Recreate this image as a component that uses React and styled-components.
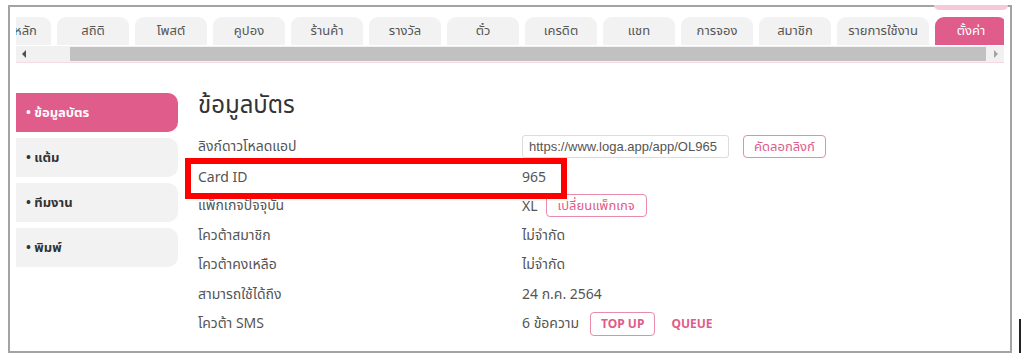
import React from "react";
import styled, { createGlobalStyle } from "styled-components";

const GlobalStyle = createGlobalStyle`
  body {
    margin: 0;
    background: #ffffff;
    font-family: "Noto Sans", "Noto Sans Thai", "Noto Sans Thai UI", "DejaVu Sans", sans-serif;
    color: #555;
  }
`;

const Frame = styled.div`
  box-sizing: border-box;
  position: relative;
  margin: 5px 0 0 8px;
  width: 1004px;
  height: 348px;
  border: 2px solid #a3a3a3;
  padding: 10px 6px 0 6px;
`;

const TabStrip = styled.div`
  border-bottom: 1px solid #f6d9e3;
`;

const TabRow = styled.div`
  display: flex;
  gap: 6px;
  overflow: hidden;
  height: 28px;
`;

const Tab = styled.div`
  flex: 0 0 auto;
  width: ${(p) => p.$w || 72}px;
  margin-left: ${(p) => p.$offset || 0}px;
  height: 28px;
  border-radius: 9px 9px 0 0;
  background: ${(p) => (p.$active ? "#e05c8a" : "#f2f2f2")};
  color: ${(p) => (p.$active ? "#fff" : "#555")};
  font-size: 13px;
  display: flex;
  align-items: center;
  justify-content: center;
  white-space: nowrap;
`;

const TopHint = styled.div`
  position: absolute;
  top: -2px;
  right: 2px;
  width: 74px;
  height: 5px;
  border-radius: 0 0 8px 8px;
  background: #f7c9d8;
`;

const Scrollbar = styled.div`
  display: flex;
  align-items: center;
  height: 16px;
  margin-top: 1px;
  background: #f1f1f1;
`;

const Arrow = styled.div`
  width: 0;
  height: 0;
  border-top: 4px solid transparent;
  border-bottom: 4px solid transparent;
  ${(p) =>
    p.$dir === "left"
      ? "border-right: 4px solid #505050; margin: 0 44px 0 6px;"
      : "border-left: 4px solid #a3a3a3; margin: 0 6px 0 8px;"}
`;

const Thumb = styled.div`
  flex: 1;
  height: 14px;
  background: #c1c1c1;
`;

const Body = styled.div`
  display: flex;
  gap: 20px;
  padding-top: 30px;
`;

const Sidebar = styled.div`
  width: 162px;
  display: flex;
  flex-direction: column;
  gap: 6px;
`;

const SideItem = styled.div`
  height: 39px;
  display: flex;
  align-items: center;
  padding-left: 10px;
  border-radius: 0 10px 10px 0;
  background: ${(p) => (p.$active ? "#e05c8a" : "#f2f2f2")};
  color: ${(p) => (p.$active ? "#fff" : "#333")};
  font-size: 13px;
  font-weight: bold;
`;

const Content = styled.div`
  position: relative;
  flex: 1;
`;

const Heading = styled.h1`
  margin: -4px 0 13px;
  font-size: 24px;
  line-height: 30px;
  font-weight: normal;
  color: #333;
`;

const Row = styled.div`
  display: grid;
  grid-template-columns: 324px 1fr;
  align-items: center;
  height: 29.5px;
  font-size: 14px;
  color: #555;
`;

const Value = styled.div`
  display: flex;
  align-items: center;
  gap: ${(p) => p.$gap ?? 8}px;
`;

const LinkInput = styled.input`
  box-sizing: border-box;
  width: 207px;
  height: 23px;
  border: 1px solid #dcdcdc;
  border-radius: 3px;
  padding: 0 6px;
  font-family: "Liberation Sans", Arial, sans-serif;
  font-size: 13px;
  color: #555;
  outline: none;
`;

const PinkButton = styled.button`
  box-sizing: border-box;
  height: ${(p) => p.$h || 23}px;
  padding: 0 ${(p) => p.$pad || 9}px;
  margin-left: ${(p) => p.$ml || 0}px;
  border: 1px solid #e98bab;
  border-radius: 4px;
  background: #fff;
  color: #e05c8a;
  font-family: inherit;
  font-size: ${(p) => (p.$bold ? 12 : 13)}px;
  font-weight: ${(p) => (p.$bold ? "bold" : "normal")};
  cursor: pointer;
`;

const LinkText = styled.span`
  margin-left: 16px;
  color: #e05c8a;
  font-size: 12px;
  font-weight: bold;
`;

const Highlight = styled.div`
  position: absolute;
  left: -13px;
  top: 65px;
  width: 382px;
  height: 41px;
  box-sizing: border-box;
  border: 6px solid #ff0000;
  pointer-events: none;
`;

const EdgeMark = styled.div`
  position: absolute;
  right: -11px;
  bottom: -12px;
  width: 2px;
  height: 44px;
  background: #222;
`;

const tabs = [
  { label: "หน้าหลัก", offset: -37 },
  { label: "สถิติ" },
  { label: "โพสต์" },
  { label: "คูปอง" },
  { label: "ร้านค้า" },
  { label: "รางวัล" },
  { label: "ตั๋ว" },
  { label: "เครดิต" },
  { label: "แชท" },
  { label: "การจอง" },
  { label: "สมาชิก" },
  { label: "รายการใช้งาน", w: 92 },
  { label: "ตั้งค่า", active: true },
];

const menu = ["ข้อมูลบัตร", "แต้ม", "ทีมงาน", "พิมพ์"];

export default function App() {
  return (
    <>
      <GlobalStyle />
      <Frame>
        <TopHint />
        <TabStrip>
          <TabRow>
            {tabs.map((t) => (
              <Tab key={t.label} $w={t.w} $offset={t.offset} $active={t.active}>
                {t.label}
              </Tab>
            ))}
          </TabRow>
          <Scrollbar>
            <Arrow $dir="left" />
            <Thumb />
            <Arrow $dir="right" />
          </Scrollbar>
        </TabStrip>
        <Body>
          <Sidebar>
            {menu.map((m, i) => (
              <SideItem key={m} $active={i === 0}>
                • {m}
              </SideItem>
            ))}
          </Sidebar>
          <Content>
            <Heading>ข้อมูลบัตร</Heading>
            <Row>
              <span>ลิงก์ดาวโหลดแอป</span>
              <Value $gap={14}>
                <LinkInput readOnly value="https://www.loga.app/app/OL965" />
                <PinkButton $pad={10}>คัดลอกลิงก์</PinkButton>
              </Value>
            </Row>
            <Row>
              <span>Card ID</span>
              <Value>965</Value>
            </Row>
            <Row>
              <span>แพ็กเกจปัจจุบัน</span>
              <Value>
                XL
                <PinkButton $pad={11}>เปลี่ยนแพ็กเกจ</PinkButton>
              </Value>
            </Row>
            <Row>
              <span>โควต้าสมาชิก</span>
              <Value>ไม่จำกัด</Value>
            </Row>
            <Row>
              <span>โควต้าคงเหลือ</span>
              <Value>ไม่จำกัด</Value>
            </Row>
            <Row>
              <span>สามารถใช้ได้ถึง</span>
              <Value>24 ก.ค. 2564</Value>
            </Row>
            <Row>
              <span>โควต้า SMS</span>
              <Value $gap={0}>
                6 ข้อความ
                <PinkButton $bold $pad={10} $ml={11} $h={24}>TOP UP</PinkButton>
                <LinkText>QUEUE</LinkText>
              </Value>
            </Row>
            <Highlight />
          </Content>
        </Body>
        <EdgeMark />
      </Frame>
    </>
  );
}
